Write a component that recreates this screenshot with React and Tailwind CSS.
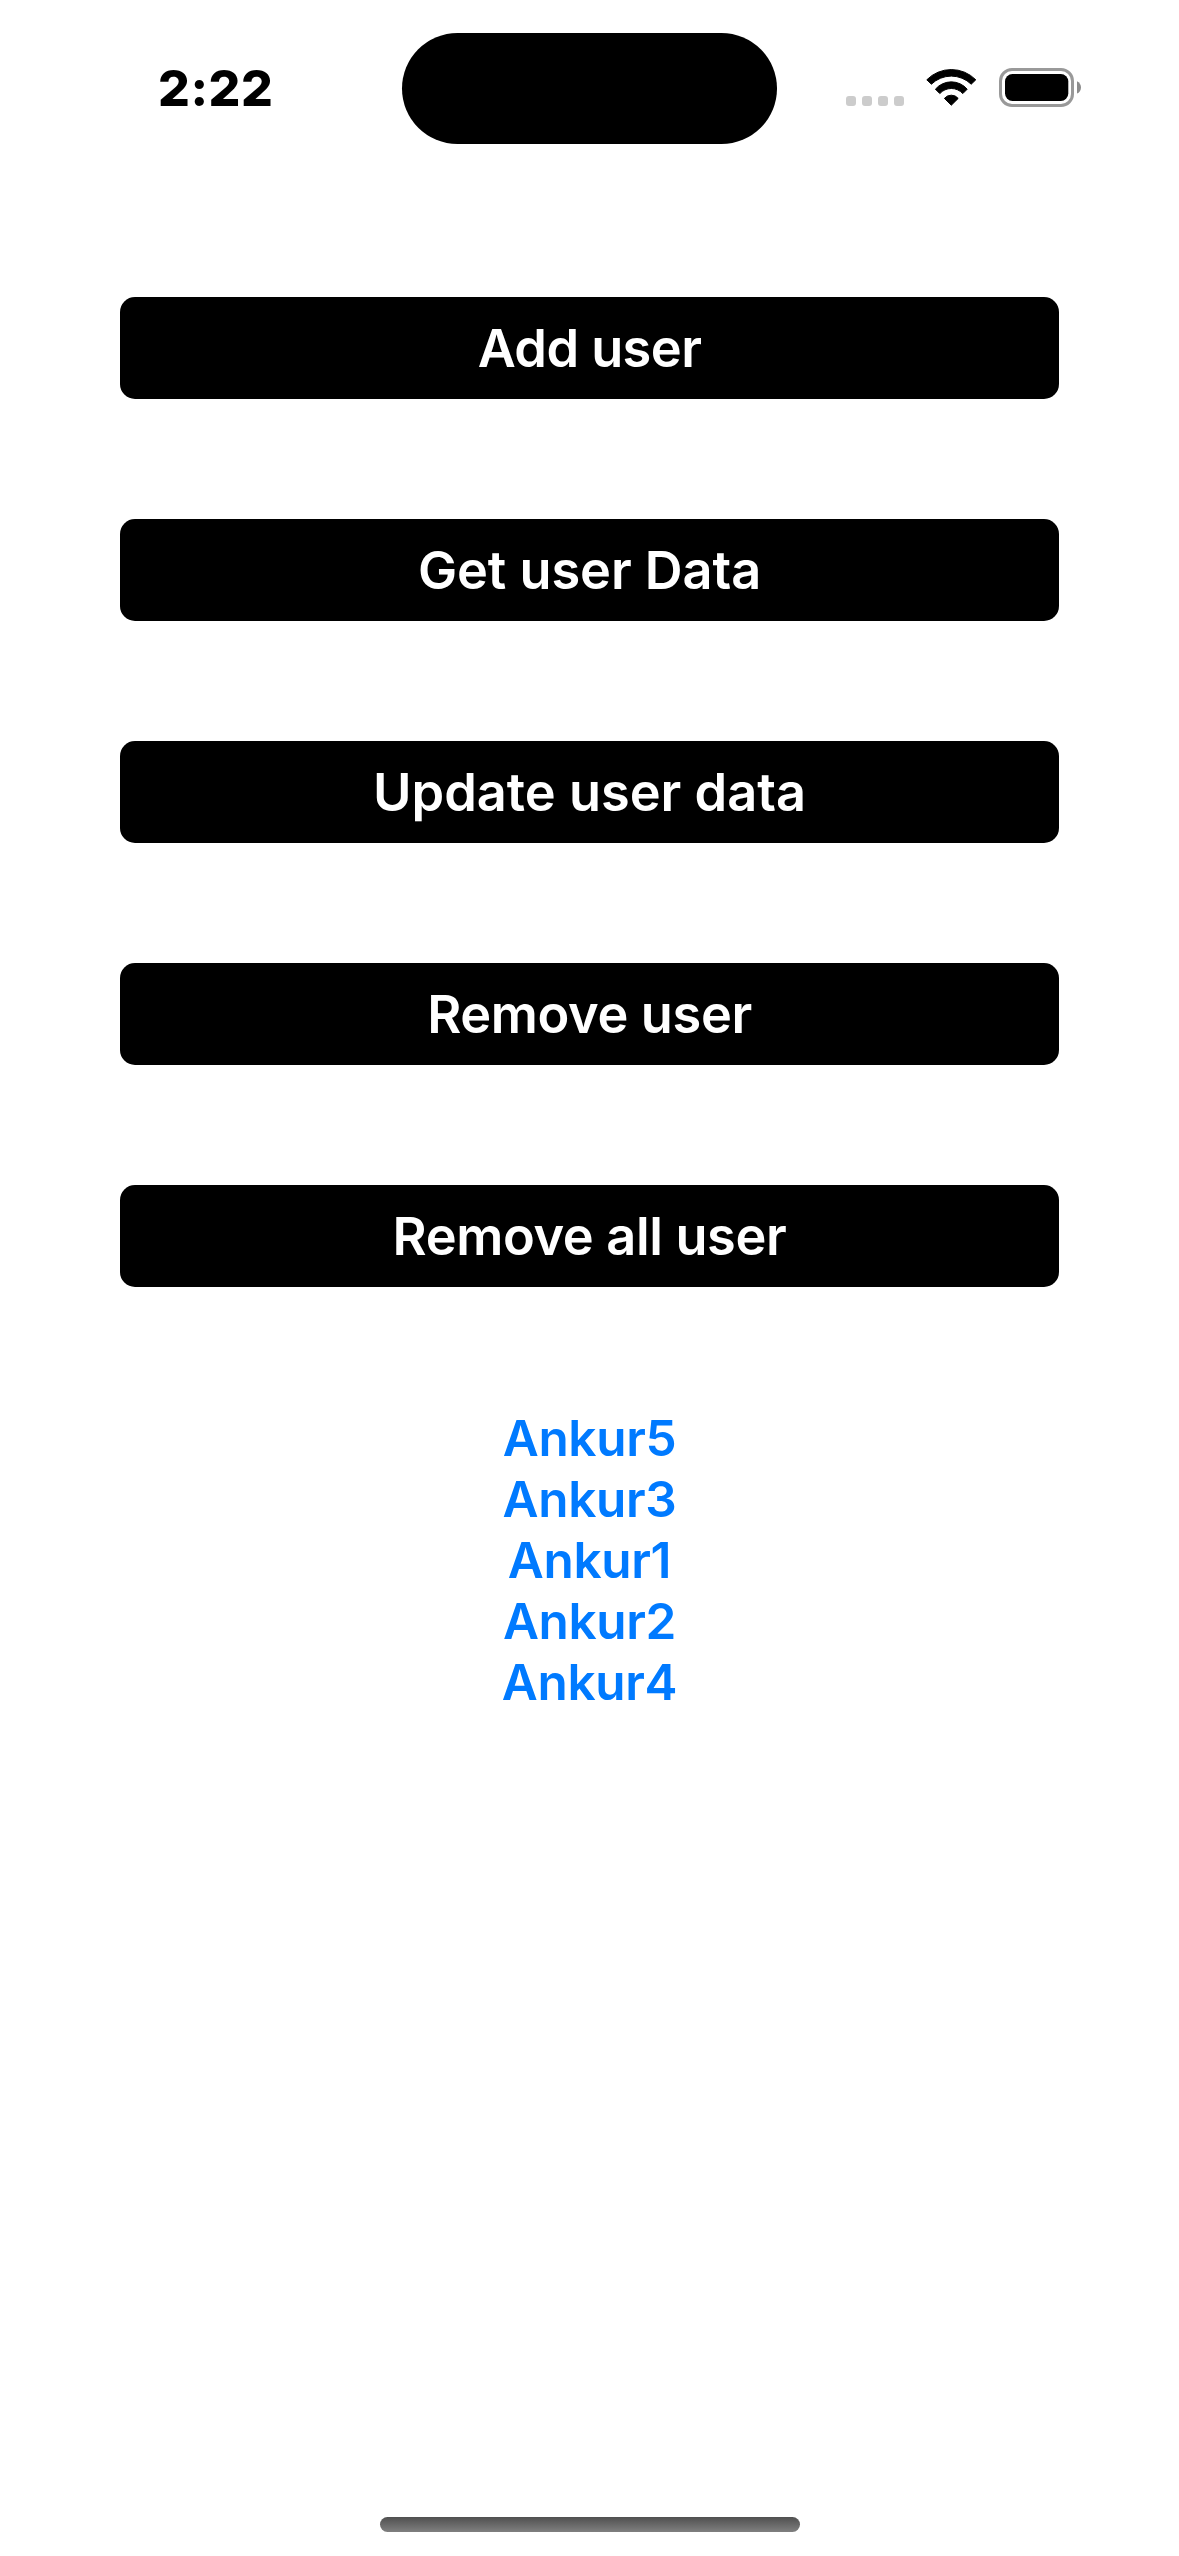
const actions = [
  { label: 'Add user', tracking: 'tracking-[-0.55px]' },
  { label: 'Get user Data', tracking: 'tracking-[-0.05px]' },
  { label: 'Update user data', tracking: 'tracking-[0px]' },
  { label: 'Remove user', tracking: 'tracking-[-0.35px]' },
  { label: 'Remove all user', tracking: 'tracking-[-0.35px]' },
];
const users = ['Ankur5', 'Ankur3', 'Ankur1', 'Ankur2', 'Ankur4'];

function StatusBar() {
  return (
    <header className="flex h-[177px] items-start">
      <div className="w-[402px] pt-[57px] pl-[158px]">
        <span className="block text-[50px] leading-[62px] font-extrabold tracking-[0.5px]">2:22</span>
      </div>
      <div className="mt-[33.4px] h-[110.6px] w-[375px] rounded-full bg-black" />
      <div className="mt-[96px] ml-[69px] flex gap-[6px]">
        <i className="size-[10px] rounded-[3px] bg-[#ccc]" />
        <i className="size-[10px] rounded-[3px] bg-[#ccc]" />
        <i className="size-[10px] rounded-[3px] bg-[#ccc]" />
        <i className="size-[10px] rounded-[3px] bg-[#ccc]" />
      </div>
      <svg className="mt-[69px] ml-[22px] h-[37px] w-[51px]" viewBox="0 0 51 37" stroke="#000" strokeWidth="1" strokeLinejoin="round">
        <path d="M0.8 10.8A34.4 34.4 0 0 1 49.8 10.8L45.2 15.2A28.5 28.5 0 0 0 5.4 15.2Z" />
        <path d="M9.4 20.2A20.9 20.9 0 0 1 41.2 20.2L36.8 24.6A15.5 15.5 0 0 0 13.8 24.6Z" />
        <path d="M18.4 29.4A9 9 0 0 1 32.2 29.4L25.3 36.2Z" />
      </svg>
      <svg className="mt-[68px] ml-[22px] h-[39px] w-[83px]" viewBox="0 0 83 39">
        <rect x="1.5" y="1.5" width="72" height="36" rx="11.5" fill="none" stroke="#999" strokeWidth="3" />
        <rect x="6" y="6" width="63.3" height="27" rx="7.5" />
        <path d="M78 13.2C80.4 14.2 82 16.6 82 19.4S80.4 24.6 78 25.6Z" fill="#8c8c8c" />
      </svg>
    </header>
  );
}

export default function App() {
  return (
    <main className="flex h-[2556px] w-[1179px] flex-col bg-white font-['Inter',sans-serif] text-black">
      <StatusBar />
      <section className="mx-[120px] mt-[120px] flex flex-col gap-[120px]">
        {actions.map(({ label, tracking }) => (
          <button key={label} className={`h-[102px] rounded-[15px] bg-black text-[52.3px] leading-[64px] font-semibold text-white ${tracking}`}>
            {label}
          </button>
        ))}
      </section>
      <ul className="mt-[121px] text-center text-[49.5px] leading-[61px] font-semibold tracking-[-0.35px] text-[#007aff]">
        {users.map((name) => <li key={name}>{name}</li>)}
      </ul>
      <div className="mt-auto mb-[24px] ml-[380px] h-[15px] w-[420px] rounded-full bg-linear-to-b from-[#505050] to-[#808080]" />
    </main>
  );
}
